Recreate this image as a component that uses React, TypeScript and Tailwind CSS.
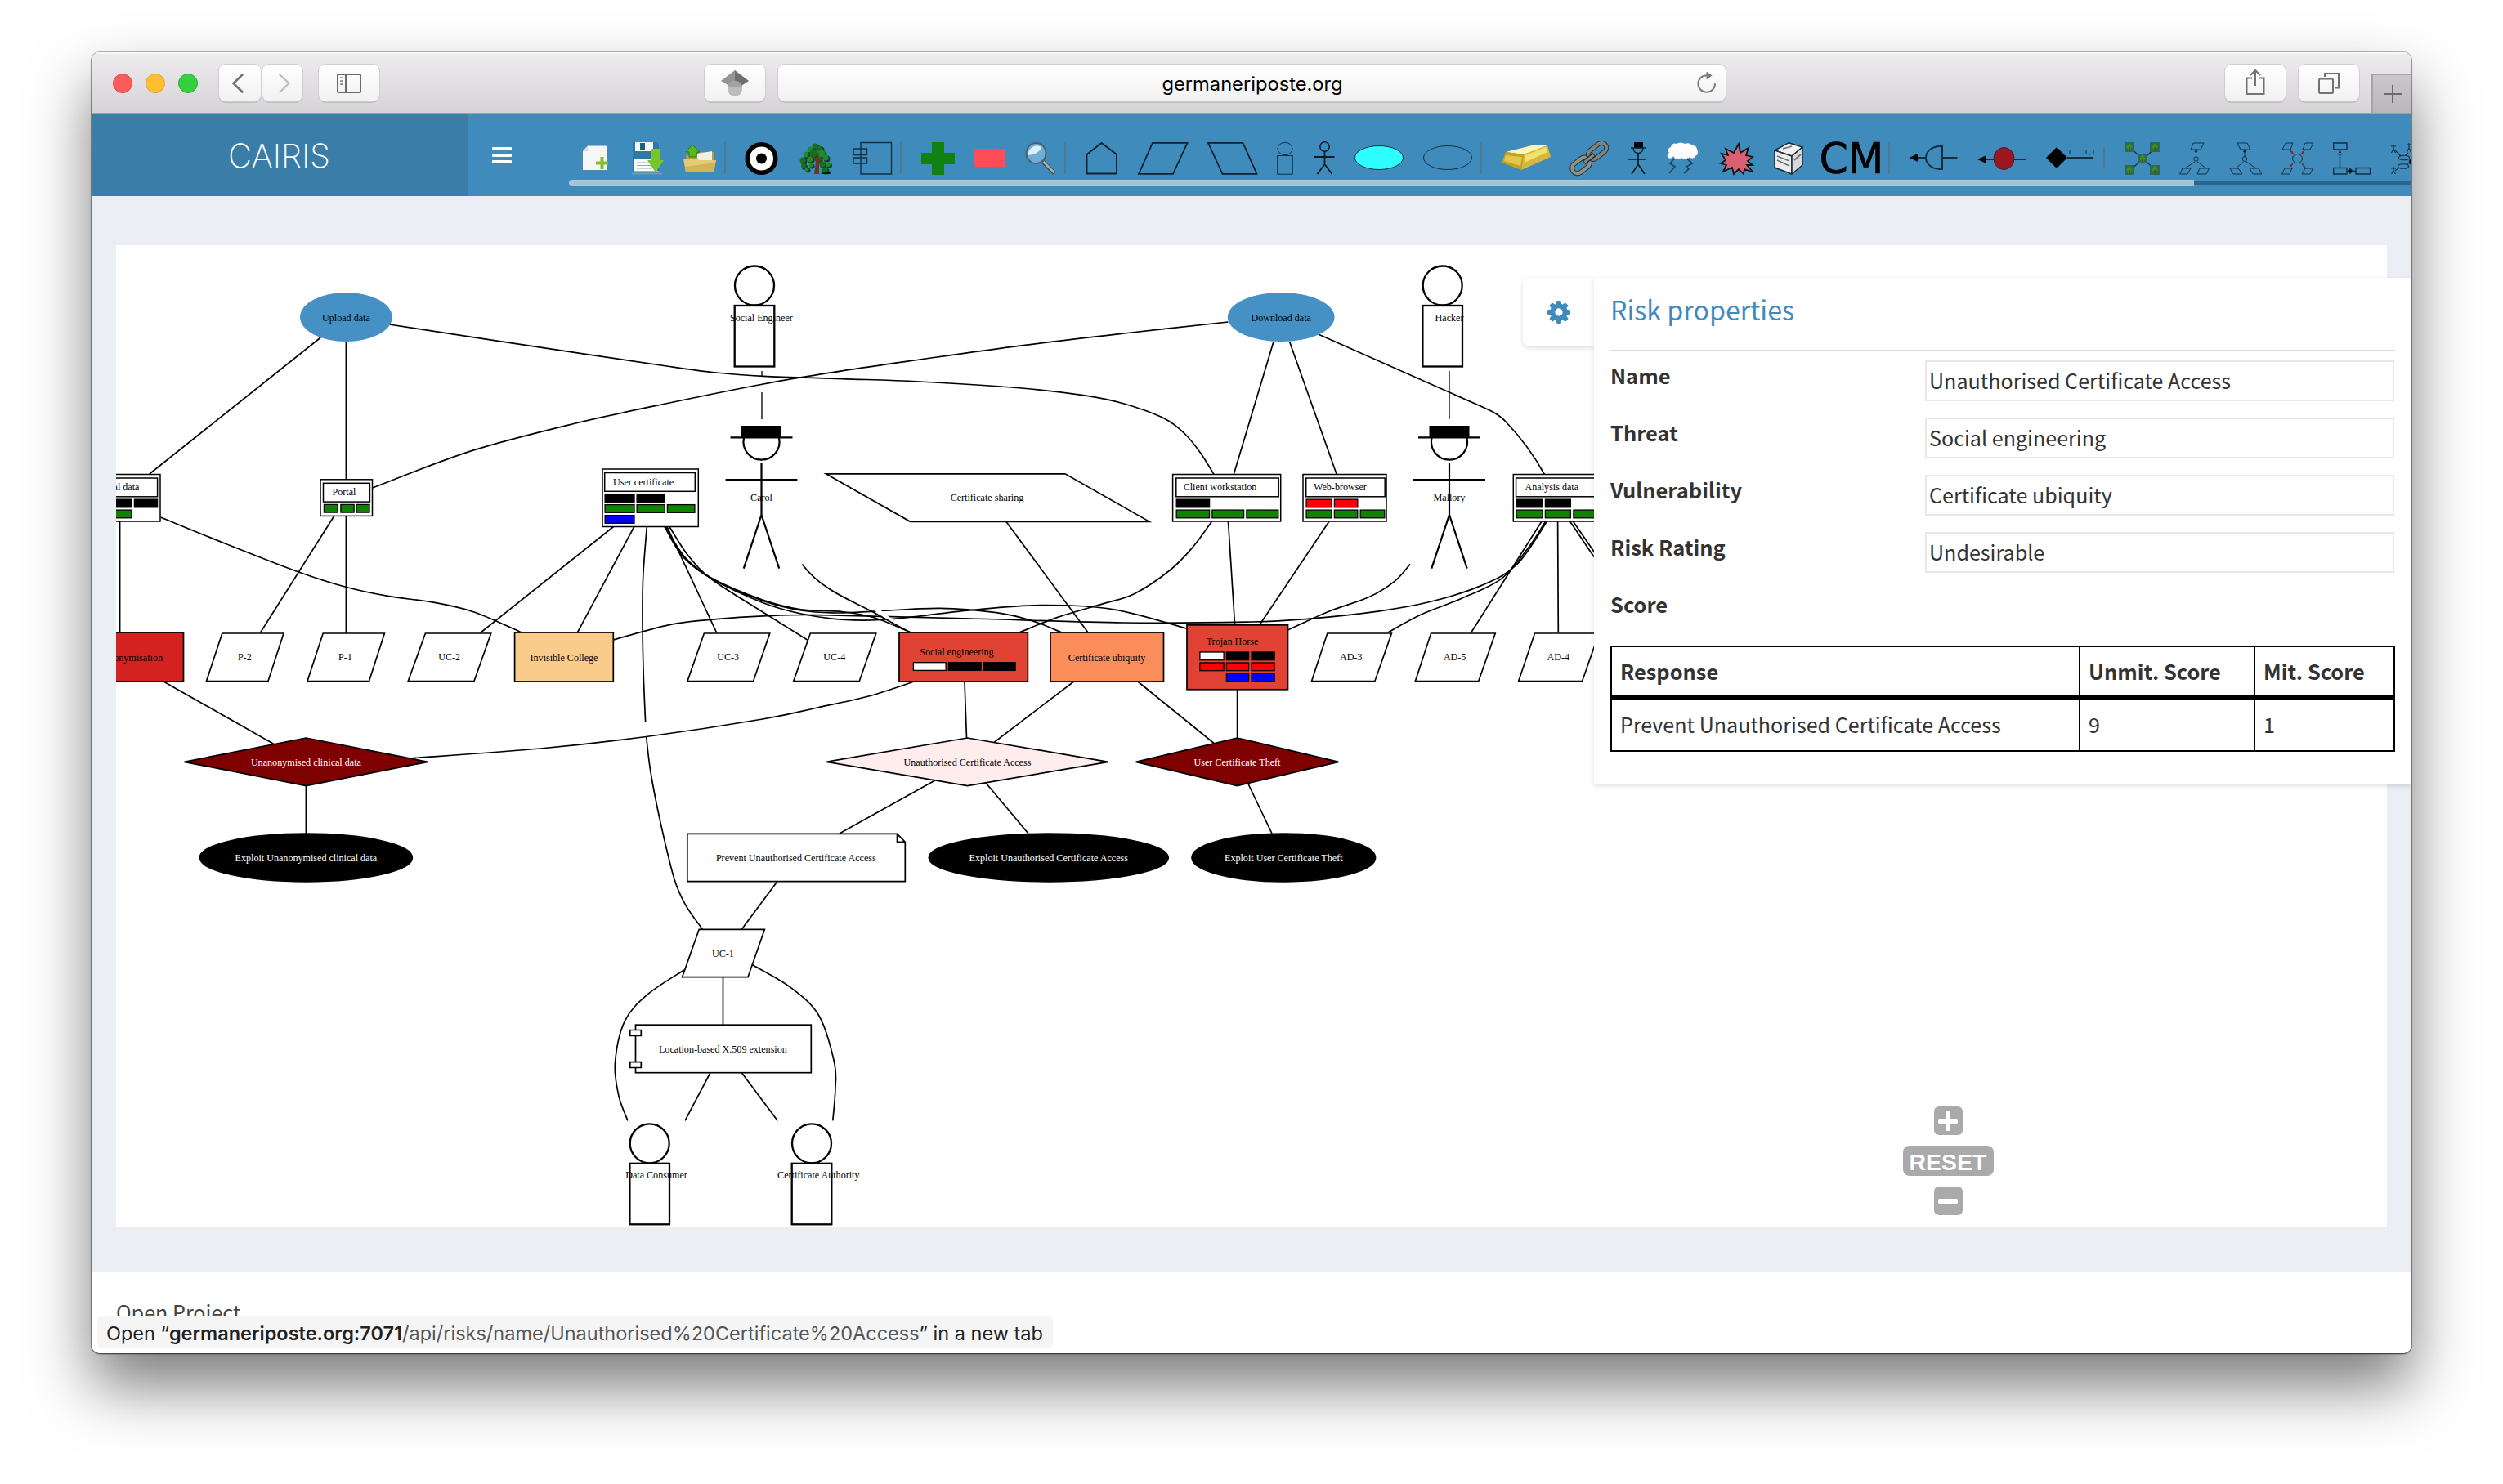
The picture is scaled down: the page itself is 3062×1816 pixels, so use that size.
import React from "react";

/* ---------- Browser chrome ---------- */

const btn =
  "flex items-center justify-center h-[45px] rounded-[8px] bg-gradient-to-b from-white to-[#f1f1f1] shadow-[0_0_0_1px_#cfcdcf,0_1.5px_0.5px_#a3a1a4]";

function TitleBar() {
  return (
    <div className="flex h-[76px] shrink-0 items-center border-b-2 border-[#a09fa2] bg-gradient-to-b from-[#eeecef] to-[#d5d3d6] pt-px shadow-[inset_0_2px_0_#f8f7f8]">
      <div className="ml-[26px] flex gap-4">
        <div className="size-6 rounded-full border border-[#e2463f] bg-[#ff5b5c]" />
        <div className="size-6 rounded-full border border-[#dfa023] bg-[#ffc02f]" />
        <div className="size-6 rounded-full border border-[#1fae2c] bg-[#35d03f]" />
      </div>
      <div className="ml-[26px] flex gap-0.5">
        <div className={`${btn} w-[51px] pr-[5px]`}>
          <svg width="14" height="24" viewBox="0 0 14 24" fill="none" stroke="#727173" strokeWidth="2.6" strokeLinecap="round" strokeLinejoin="round">
            <path d="M12.5 1.5 L1.5 12 L12.5 22.5" />
          </svg>
        </div>
        <div className={`${btn} w-[49px] pl-[4px]`}>
          <svg width="14" height="24" viewBox="0 0 14 24" fill="none" stroke="#bdbcbe" strokeWidth="2.4" strokeLinecap="round" strokeLinejoin="round">
            <path d="M1.5 1.5 L12.5 12 L1.5 22.5" />
          </svg>
        </div>
      </div>
      <div className={`${btn} ml-5 w-[74px]`}>
        <svg width="30" height="24" viewBox="0 0 30 24" fill="none" stroke="#6b6a6c">
          <rect x="1" y="1" width="28" height="22" rx="1.5" strokeWidth="2" />
          <path d="M11 1V23" strokeWidth="2" />
          <path d="M4 5.2H8M4 9.2H8M4 13.2H8" strokeWidth="1.8" stroke="#8a898b" />
        </svg>
      </div>
      <div className={`${btn} ml-[398px] w-[74px]`}>
        <svg width="34" height="32" viewBox="0 0 34 32">
          <path d="M17 0 L0 13 L10 19 L17 15Z" fill="#949494" />
          <path d="M17 0 L34 13 L25 19 L17 15Z" fill="#6f6f6f" />
          <path d="M17 14 a9 9 0 0 1 9 9 a9 9 0 0 1 -18 0 a9 9 0 0 1 9 -9" fill="#bcbcbc" />
          <path d="M8 20 a9.2 9.2 0 0 1 18 0 L17 20Z" fill="#a3a3a3" />
        </svg>
      </div>
      <div className={`${btn} relative ml-4 w-[1160px]`}>
        <span className="pl-px pt-[3px] font-[Inter] text-[23.7px] text-black">germaneriposte.org</span>
        <svg className="absolute right-[11px] top-[9px]" width="24" height="26" viewBox="0 0 24 26" fill="none" stroke="#7b7a7c" strokeWidth="2">
          <path d="M22 14.2 A10.3 10.3 0 1 1 12 4.2" />
          <path d="M11.5 -0.5 L18.5 4.5 L11.5 9.5Z" fill="#7b7a7c" stroke="none" />
        </svg>
      </div>
      <div className={`${btn} ml-[611px] w-[74px]`}>
        <svg className="-mt-1" width="24" height="32" viewBox="0 0 24 32" fill="none" stroke="#727173" strokeWidth="2">
          <path d="M8 11.5H1.5V31H22.5V11.5H16" />
          <path d="M12 21V2M6 8L12 2L18 8" />
        </svg>
      </div>
      <div className={`${btn} ml-4 w-[74px]`}>
        <svg width="26" height="26" viewBox="0 0 26 26" fill="none" stroke="#727173" strokeWidth="2">
          <rect x="1" y="7.5" width="17" height="17.5" rx="1.5" />
          <path d="M8 5V1H25V18.5H21" />
        </svg>
      </div>
      <div className="ml-[15px] flex h-[48px] w-[49px] items-center justify-center self-end border-l-2 border-t-2 border-[#a6a4a7] bg-gradient-to-b from-[#c9c7ca] to-[#b9b7ba]">
        <svg width="22" height="22" viewBox="0 0 22 22" stroke="#69686a" strokeWidth="2">
          <path d="M11 0V22M0 11H22" />
        </svg>
      </div>
    </div>
  );
}

/* ---------- Toolbar ---------- */

function Icon({ x, w, ml, children }: { x: number; w: number; ml: string; children: React.ReactNode }) {
  return (
    <svg className={`shrink-0 overflow-visible ${ml}`} width={w} height={40} viewBox={`${x} 174 ${w} 40`} fill="none" stroke="#12303f" strokeWidth="1.4">
      {children}
    </svg>
  );
}

function Sep({ ml }: { ml: string }) {
  return <div className={`h-[39px] w-0.5 shrink-0 bg-[#4d7a97] ${ml}`} />;
}

function MiniTree({ x, y }: { x: number; y: number }) {
  return (
    <g stroke="none">
      <rect x={x} y={y} width="12" height="12" fill="#2a6a55" />
      <path d={`M${x + 6} ${y + 1} l4 5 l-2 1 l-1 4 h-2 l-1 -3 l-2 -2z`} fill="#3d8f1e" />
      <path d={`M${x + 6} ${y + 6} v5`} stroke="#6b3d10" strokeWidth="1.5" />
    </g>
  );
}

const leaves: [number, number, number][] = [
  [997, 179, 4], [991, 183, 4], [1003, 182, 4], [986, 189, 4], [995, 188, 5], [1005, 188, 5], [982, 196, 4],
  [991, 195, 4], [1001, 195, 4], [1010, 193, 4], [983, 203, 3.5], [992, 202, 3], [1006, 201, 4], [1013, 201, 3.5],
  [1009, 208, 4], [987, 207, 3],
];

function ToolIcons() {
  return (
    <div className="flex h-10 shrink-0">
      <Icon x={713} w={32} ml="ml-[17px]">
        <path d="M719 178.500H743V208H713V185Z" fill="#f6f6f6" stroke="none" />
        <path d="M713 185H719V178.500Z" fill="#dcdcdc" stroke="none" />
        <path d="M736.500 192V207M729 199.500H744" stroke="#84bd24" strokeWidth="4" />
      </Icon>
      <Icon x={773} w={39} ml="ml-[28px]">
        <path d="M774 174H803L806 177V211H774Z" fill="#2c7ba6" stroke="none" />
        <rect x="777" y="174" width="22" height="11" fill="#f7f7f7" stroke="none" />
        <rect x="783" y="175" width="6" height="9" fill="#1f5f86" stroke="none" />
        <rect x="776" y="195" width="28" height="14" fill="#fbfbfb" stroke="none" />
        <path d="M779 199H798M779 202.500H798M779 206H798" stroke="#98a6b5" strokeWidth="1" />
        <path d="M775 210H806" stroke="#d8aa53" strokeWidth="2" />
        <path d="M773 212.500H810" stroke="#7d99a8" strokeWidth="2" />
        <path d="M797 182H807V196H812L802 211L792 196H797Z" fill="#76c52b" stroke="none" />
      </Icon>
      <Icon x={836} w={40} ml="ml-[24px]">
        <path d="M839 190H852L856 186H874V206H839Z" fill="#b99a45" stroke="none" />
        <path d="M853 188L871 185V196H853Z" fill="#f2efe4" stroke="none" />
        <path d="M836 194H852L856 196H876L873 211H839Z" fill="#e6ca78" stroke="none" />
        <path d="M838 204L875 199L873 211H839Z" fill="#d4b355" stroke="none" />
        <path d="M847 177L856 186H852V192H843V186H839Z" fill="#5bb81c" stroke="#2f7d10" strokeWidth="1" />
      </Icon>
      <Sep ml="ml-[10px]" />
      <Icon x={911} w={41} ml="ml-[23px]">
        <g stroke="none">
          <circle cx="931.5" cy="194" r="20" fill="#000" />
          <circle cx="931.5" cy="194" r="14.500" fill="#fff" />
          <circle cx="931.5" cy="194" r="6.500" fill="#000" />
        </g>
      </Icon>
      <Icon x={976} w={42} ml="ml-[24px]">
        <g stroke="none">
          {leaves.map(([cx, cy, r], i) => (
            <g key={i}>
              <circle cx={cx + 1.5} cy={cy + 1.5} r={r} fill="#0f3d24" />
              <circle cx={cx} cy={cy} r={r - 0.5} fill={i % 2 ? "#1f8a2c" : "#17701f"} />
            </g>
          ))}
          <path d="M996 213L998 198L992 190L999 194L1001 186L1002 195L1008 191L1002 200L1002 213Z" fill="#6a3526" />
          <path d="M1004 213L1008 210H1018L1015 213Z" fill="#081a10" />
        </g>
      </Icon>
      <Icon x={1043} w={48} ml="ml-[25px]">
        <path d="M1053 174.500H1090.500V213H1053Z" />
        <path d="M1044 182H1060.500V189.500H1044ZM1044 193H1060.500V200H1044Z" />
      </Icon>
      <Sep ml="ml-[10px]" />
      <Icon x={1127} w={41} ml="ml-[24px]">
        <path d="M1140 174H1155V187H1168V201H1155V214H1140V201H1127V187H1140Z" fill="#118211" stroke="none" />
      </Icon>
      <Icon x={1192} w={38} ml="ml-[24px]">
        <rect x="1192" y="182" width="38" height="22" fill="#ff4d56" stroke="none" />
      </Icon>
      <Icon x={1254} w={38} ml="ml-[24px]">
        <ellipse cx="1267.500" cy="187.500" rx="12" ry="12.500" fill="#6fadd6" stroke="#4a5f70" strokeWidth="2" />
        <path d="M1258 190a10.500 10.500 0 0 1 16 -10q-3 9 -16 10" fill="#dceefa" stroke="none" />
        <path d="M1276 198L1290 212" stroke="#3f4c52" strokeWidth="5" />
        <path d="M1276.500 198L1290 211.500" stroke="#a4b3a8" strokeWidth="2.600" />
      </Icon>
      <Sep ml="ml-[10px]" />
      <Icon x={1328} w={40} ml="ml-[24px]">
        <path d="M1329.500 189L1347.500 175L1366 189V212.500H1329.500Z" strokeWidth="2" stroke="#0d2230" />
      </Icon>
      <Icon x={1392} w={62} ml="ml-[24px]">
        <path d="M1410 174.800H1452.500L1435 212.800H1393Z" strokeWidth="1.800" stroke="#0d2230" />
      </Icon>
      <Icon x={1477} w={62} ml="ml-[23px]">
        <path d="M1478 174.800H1520.500L1537.500 212.800H1495.500Z" strokeWidth="1.800" stroke="#0d2230" />
      </Icon>
      <Icon x={1562} w={20} ml="ml-[23px]">
        <ellipse cx="1572" cy="182" rx="9" ry="7.700" strokeWidth="1" />
        <rect x="1562.700" y="190.500" width="18.600" height="22.700" strokeWidth="1" />
      </Icon>
      <Icon x={1606} w={28} ml="ml-[24px]">
        <g strokeWidth="1.800" stroke="#0b1b25">
          <circle cx="1620.500" cy="179.500" r="5.700" strokeWidth="1.500" />
          <path d="M1620.500 185V201M1607.500 192H1632.500M1611.500 213L1620.500 201L1629.500 213" />
        </g>
      </Icon>
      <Icon x={1656} w={62} ml="ml-[22px]">
        <ellipse cx="1687" cy="193" rx="29.500" ry="14.500" fill="#2cfffd" strokeWidth="1" />
      </Icon>
      <Icon x={1740} w={62} ml="ml-[22px]">
        <ellipse cx="1771" cy="193" rx="29.500" ry="14.500" strokeWidth="1" />
      </Icon>
      <Sep ml="ml-[9px]" />
      <Icon x={1837} w={60} ml="ml-[24px]">
        <g stroke="none">
          <path d="M1842 186L1874 178H1893L1864 189Z" fill="#fff6b8" />
          <path d="M1842 186L1864 189L1861 208L1837 199Z" fill="#c99f1c" />
          <path d="M1842 190L1862 192L1860 203L1840 197Z" fill="#e3c748" />
          <path d="M1864 189L1893 178L1897 192L1861 208Z" fill="#d8b83c" />
          <path d="M1866 190L1891 180L1893 186L1865 199Z" fill="#f2e06f" />
        </g>
      </Icon>
      <Icon x={1920} w={48} ml="ml-[23px]">
        <g transform="rotate(-38 1944 194)" strokeLinejoin="round">
          <rect x="1919" y="188" width="24" height="13" rx="6.500" stroke="#27303a" strokeWidth="6" />
          <rect x="1919" y="188" width="24" height="13" rx="6.500" stroke="#8f9484" strokeWidth="4" />
          <rect x="1945" y="187" width="25" height="12" rx="6" stroke="#27303a" strokeWidth="6" />
          <rect x="1945" y="187" width="25" height="12" rx="6" stroke="#7f857a" strokeWidth="4" />
          <path d="M1936 194H1952" stroke="#27303a" strokeWidth="6" />
          <path d="M1937 194H1951" stroke="#858c80" strokeWidth="3" />
        </g>
      </Icon>
      <Icon x={1991} w={24} ml="ml-[23px]">
        <g stroke="#0b1b25" strokeWidth="1.700">
          <rect x="1999" y="174" width="11" height="7" fill="#000" stroke="none" />
          <path d="M1995 181H2013" />
          <path d="M1998 181.500a6 6 0 1 0 12 0" strokeWidth="1.400" />
          <path d="M2004 187V201M1992 195H2014M1996 213L2004 201L2012 213" />
        </g>
      </Icon>
      <Icon x={2039} w={40} ml="ml-[24px]">
        <path d="M2042 187a4 4 0 0 1 2-7a5 5 0 0 1 7-4a7 5 0 0 1 10 0a6 4 0 0 1 9 2a5 5 0 0 1 6 5a5 5 0 0 1-2 8a4 4 0 0 1-7 1a6 5 0 0 1-10 1a6 5 0 0 1-10-2a4 4 0 0 1-7 1a4 4 0 0 1 2-5" fill="#fdfdfd" stroke="none" />
        <path d="M2048 194L2043 200L2049 204L2042 212M2064 194L2070 200L2063 204L2066 207L2060 212" stroke="#1d4763" strokeWidth="1.800" />
      </Icon>
      <Icon x={2104} w={42} ml="ml-[25px]">
        <path d="M2127 176L2129 187L2139 181L2136 190L2144 192L2138 197L2144 202L2137 202L2145 211L2134 207L2133 213L2127 207L2121 213L2119 205L2108 210L2112 202L2105 200L2111 196L2106 188L2114 190L2111 182L2121 187Z" fill="#dc5f73" stroke="#10161c" strokeWidth="1.800" />
      </Icon>
      <Icon x={2170} w={36} ml="ml-[24px]">
        <g stroke="#1c2a33" strokeWidth="1.500" strokeLinejoin="round">
          <path d="M2188 174.800L2205 180L2192 191L2171 184Z" fill="#f0f0f0" />
          <path d="M2171 184L2192 191V213L2171 205Z" fill="#ececec" />
          <path d="M2205 180L2192 191V213L2205 202Z" fill="#d9d9d9" />
          <path d="M2174 191L2189 197M2174 196L2189 203M2181 182L2192 179M2195 196L2203 189" stroke="#6d7376" strokeWidth="1.800" />
        </g>
      </Icon>
      <Icon x={2228} w={72} ml="ml-[22px]">
        <text x="2225.500" y="212" fontSize="51" textLength="79" lengthAdjust="spacingAndGlyphs" fill="#000" stroke="#000" strokeWidth="0.600" className="font-['DejaVu_Sans']">CM</text>
      </Icon>
      <Sep ml="ml-[10px]" />
      <Icon x={2335} w={60} ml="ml-[23px]">
        <path d="M2335.500 193L2346 188V198Z" fill="#05090c" stroke="none" />
        <path d="M2346 193H2356M2376 193H2394.500" strokeWidth="2" />
        <path d="M2376 179H2372C2361 180 2356 187 2356 193C2356 199 2361 206 2372 207H2376Z" strokeWidth="2" />
      </Icon>
      <Icon x={2419} w={60} ml="ml-[24px]">
        <path d="M2419 195L2430 190V200Z" fill="#05090c" stroke="none" />
        <path d="M2430 195H2478" strokeWidth="2" />
        <ellipse cx="2451.500" cy="194" rx="12.500" ry="13.500" fill="#9b1720" stroke="#4a1a2c" strokeWidth="1" />
      </Icon>
      <Icon x={2503} w={60} ml="ml-[24px]">
        <path d="M2503 193L2516 180L2529 193L2516 206Z" fill="#000" stroke="none" />
        <path d="M2529 193H2561" strokeWidth="2" />
        <path d="M2532 184V189M2552 184V189M2556 188V190M2561 184V188" strokeWidth="1" />
      </Icon>
      <div className="ml-[10px] mt-1.5 h-[27px] w-0.5 shrink-0 bg-[#4d7a97]" />
      <Icon x={2599} w={44} ml="ml-[24px]">
        <path d="M2607 182L2636 207M2636 182L2607 207" />
        <MiniTree x={2599} y={174} />
        <MiniTree x={2630} y={174} />
        <MiniTree x={2615} y={188} />
        <MiniTree x={2599} y={202} />
        <MiniTree x={2630} y={202} />
      </Icon>
      <Icon x={2666} w={37} ml="ml-[23px]">
        <g strokeWidth="1">
          <path d="M2683 175H2696L2692 183H2680ZM2670 206H2680L2676 213H2666.500ZM2691 206H2702.500L2699 213H2688Z" />
          <path d="M2686.500 183V192M2685 198L2673 206M2688 198L2699 206" />
          <circle cx="2686.500" cy="194.500" r="2.800" />
          <path d="M2685 186L2686.500 183L2688 186Z" fill="#000" />
        </g>
      </Icon>
      <Icon x={2727} w={40} ml="ml-[24px]">
        <g strokeWidth="1">
          <path d="M2737 175H2749L2753 183H2741ZM2728 206H2738L2743 213H2732ZM2752 206H2763L2767 213H2756Z" />
          <path d="M2746 183V192M2744.500 198L2735 206M2748 198L2760 206" />
          <circle cx="2746" cy="194.500" r="2.800" />
          <path d="M2744.500 186L2746 183L2747.500 186Z" fill="#000" />
        </g>
      </Icon>
      <Icon x={2791} w={39} ml="ml-[24px]">
        <g strokeWidth="1">
          <path d="M2796 175H2805L2802 183H2792ZM2820 175H2830L2826 183H2817ZM2795 206H2804L2801 213H2791.500ZM2820 206H2829.500L2826 213H2816Z" />
          <path d="M2801 183L2806 189M2820 183L2815 189M2806 199L2800 206M2815 199L2821 206" />
          <ellipse cx="2810.500" cy="194" rx="6" ry="5.500" />
          <path d="M2803 185L2805 188M2818 185L2816 188M2804 201L2802 204M2817 201L2819 204" stroke="#8c1d2d" strokeWidth="2" />
        </g>
      </Icon>
      <Icon x={2854} w={46} ml="ml-[24px]">
        <path d="M2854.700 175H2871V183H2854.700ZM2854.700 205.500H2871V213H2854.700ZM2882 205.500H2899.500V213H2882Z" />
        <path d="M2862.500 183V205.500M2871 209.500H2882" />
        <path d="M2862.500 184L2864.500 189H2860.500Z" fill="#fff" strokeWidth="1" />
        <path d="M2872 209.500L2875 206.500L2878 209.500L2875 212Z" fill="#000" />
      </Icon>
      <Icon x={2924} w={40} ml="ml-[24px]">
        <g strokeWidth="1.100">
          <path d="M2928 177V182M2925 179H2931M2925.500 187L2928 182L2930.500 187M2947 175V181M2944 177H2950M2944.500 186L2947 181L2949.500 186" />
          <path d="M2928 204V209M2925 206H2931M2925.500 213L2928 209L2930.500 213" />
          <ellipse cx="2941" cy="193" rx="6.500" ry="2.800" />
          <ellipse cx="2940" cy="203.500" rx="6.500" ry="2.800" />
          <path d="M2930 184L2937 191M2946 187L2943 190M2930 209L2935 205M2944 201L2950 198" />
          <circle cx="2950" cy="198" r="2.800" fill="#000" />
        </g>
      </Icon>
    </div>
  );
}

function Header() {
  return (
    <div className="flex h-[100px] shrink-0 bg-[#3f8bbc]">
      <div className="flex w-[460px] items-center justify-center bg-[#397da8]">
        <svg className="overflow-visible" width="126" height="44" viewBox="0 0 126 44">
          <text x="0" y="36.500" fontSize="40" fill="#fff" textLength="125" lengthAdjust="spacingAndGlyphs" className="font-['Inter'] font-extralight">CAIRIS</text>
        </svg>
      </div>
      <div className="ml-[30px] mt-10 flex w-6 flex-col gap-1">
        <div className="h-1 rounded-[1px] bg-white" />
        <div className="h-1 rounded-[1px] bg-white" />
        <div className="h-1 rounded-[1px] bg-white" />
      </div>
      <div className="ml-[70px] w-[2254px] overflow-hidden pt-[34px]">
        <ToolIcons />
        <div className="mt-1.5 flex h-2 items-center">
          <div className="h-2 w-[1990px] rounded border-2 border-[#a9cbe2] bg-[#a5c1d2]" />
          <div className="-ml-0.5 h-1 flex-1 bg-[#2c6588]" />
        </div>
      </div>
    </div>
  );
}

/* ---------- Risk model graph ---------- */

type Pt = [number, number];

/* Catmull-Rom spline through the given points, as a cubic Bézier path. */
function spline(p: Pt[]): string {
  let d = `M${p[0][0]} ${p[0][1]}`;
  for (let i = 0; i < p.length - 1; i++) {
    const a = p[i - 1] ?? p[i];
    const b = p[i];
    const c = p[i + 1];
    const e = p[i + 2] ?? c;
    d += `C${b[0] + (c[0] - a[0]) / 6} ${b[1] + (c[1] - a[1]) / 6} ${c[0] - (e[0] - b[0]) / 6} ${c[1] - (e[1] - b[1]) / 6} ${c[0]} ${c[1]}`;
  }
  return d;
}

const lines: [number, number, number, number][] = [
  [392.3, 413, 182.8, 580], [423.4, 418, 423.4, 587], [146.6, 638, 146.6, 774], [409, 631, 318.3, 774.5],
  [423.4, 631, 423.4, 775], [750.5, 644.5, 587.5, 774.5], [775.8, 644.5, 706.4, 774], [816, 644.5, 876.8, 774.5],
  [1558, 418, 1509.4, 580], [1577.5, 418, 1635, 580], [1231, 638.5, 1331, 774], [1502.5, 638, 1510.6, 764.5],
  [1626, 638, 1541, 764.5], [1886, 638, 1799.4, 774.5], [1905.6, 638, 1906.3, 774.5], [1920.6, 638, 1950, 681.6],
  [1924.4, 638, 1952, 678], [1180, 834.5, 1182.5, 903], [1313, 834.5, 1216, 908.5], [1392.5, 834.5, 1485, 909.5],
  [1513.6, 844, 1513.6, 903], [201, 834.5, 335, 910.5], [374.4, 961.6, 374.4, 1020], [1143.8, 955, 1026.9, 1020],
  [1206, 958, 1258, 1020], [1526.9, 959, 1556, 1020], [950.6, 1079, 907.5, 1137], [884.5, 1195.5, 884.5, 1254],
  [868.8, 1313, 838, 1371.4], [907.5, 1313, 951.3, 1371.4],
];

const curves: Pt[][] = [
  [[196.6, 633], [276.4, 665.5], [365.4, 700], [422.8, 718.3], [474.4, 729.4], [531.8, 737.4], [580, 749], [638, 774]],
  [[791.3, 644.5], [786.7, 705.7], [786, 759], [787, 820], [789.6, 883.6]],
  [[790.6, 901], [796, 945], [808, 1006.5], [825, 1076], [839.4, 1108.6], [859.4, 1137]],
  [[818.9, 644.5], [842, 680], [870.5, 708.7], [930, 747], [988, 783.3]],
  [[813, 644.5], [836, 682], [870.5, 707.6], [933.7, 734.4], [979.6, 745.8], [1030, 748.5], [1070, 756], [1114, 774]],
  [[813.5, 644.5], [837, 682], [871, 708.5], [934, 735.5], [980, 747], [1025, 750], [1073.8, 747.8], [1150, 744.3], [1218.8, 749.7], [1262.5, 759.6], [1298.8, 774]],
  [[814, 644.5], [838, 682], [872, 708.5], [933, 737.5], [980, 751], [1030, 758.2], [1087.5, 758], [1187.5, 746.6], [1275, 740.5], [1362.5, 745.8], [1451.5, 769]],
  [[750.5, 783], [818.9, 764.6], [876.3, 757.7], [933.7, 753.9], [1000, 752.6], [1187.5, 757], [1375, 762], [1531, 761], [1600, 757.3], [1687.5, 747.8], [1750, 736.3], [1812.5, 716.4], [1856, 690.4], [1892.5, 638]],
  [[476, 397], [618, 418.6], [819, 448.5], [876, 456], [933.7, 460.3], [1030, 463.6], [1125, 467], [1250, 475], [1325, 483.7], [1375, 494], [1425, 512.4], [1450, 531.5], [1468.8, 554.5], [1485, 580.5]],
  [[455.5, 597], [577.8, 551.4], [704, 518], [819, 493], [933.7, 470], [1030, 453.8], [1125, 440], [1250, 422.8], [1375, 408], [1502.5, 394]],
  [[1482.5, 638], [1459.4, 669.3], [1431, 698], [1387.5, 726.7], [1350, 738.6], [1293.8, 755.4], [1247, 774]],
  [[1725, 690.4], [1706, 711.4], [1675, 730.5], [1625, 748.5], [1575.6, 771]],
  [[1890.6, 638], [1872, 667], [1837.5, 707.6], [1787.5, 732.5], [1737.5, 752.4], [1698, 774]],
  [[1116.9, 834.5], [1062.5, 852], [1000, 866], [933, 880], [790.6, 901.5], [661, 916], [503.8, 927.8]],
  [[836.9, 1187], [792.5, 1216.7], [764.4, 1249.4], [752.5, 1300.4], [756.9, 1341], [768, 1371.4]],
  [[920.6, 1180.8], [967.5, 1208.6], [1001.9, 1243], [1020.6, 1300], [1021.9, 1333], [1018.8, 1371.4]],
];

/* Parallelogram given by its four x positions: top-left, top-right, bottom-right, bottom-left. */
function Para({ xs, y1 = 775, y2 = 833.5, label, tx }: { xs: [number, number, number, number]; y1?: number; y2?: number; label: string; tx: number }) {
  const pts: Pt[] = [[xs[0], y1], [xs[1], y1], [xs[2], y2], [xs[3], y2]];
  return (
    <g>
      <polygon points={pts.map((p) => p.join(",")).join(" ")} fill="#fff" />
      <Label x={tx} y={(y1 + y2) / 2}>{label}</Label>
    </g>
  );
}

function Label({ x, y, anchor = "middle", color = "#000", children }: { x: number; y: number; anchor?: "start" | "middle" | "end"; color?: string; children: string }) {
  return (
    <text x={x} y={y + 4} fontSize="12.1" fill={color} stroke="none" textAnchor={anchor}>
      {children}
    </text>
  );
}

type Cell = [number, number, string];
function Cells({ y, h = 10.5, cells }: { y: number; h?: number; cells: Cell[] }) {
  return (
    <g strokeWidth="1.3">
      {cells.map(([a, b, c], i) => (
        <rect key={i} x={a + 0.4} y={y + 0.4} width={b - a - 0.8} height={h - 0.8} fill={c} />
      ))}
    </g>
  );
}

function Asset({ x1, x2, y1, y2, ix1, ix2, tx, label, rows }: { x1: number; x2: number; y1: number; y2: number; ix1: number; ix2: number; tx: number; label: string; rows: Cell[][] }) {
  return (
    <g strokeWidth="1.5">
      <rect x={x1} y={y1} width={x2 - x1} height={y2 - y1} fill="#fff" />
      <rect x={ix1} y={y1 + 4.5} width={ix2 - ix1} height={22.8} fill="#fff" />
      <Label x={tx} y={y1 + 15.5} anchor="start">{label}</Label>
      {rows.map((r, i) => (
        <Cells key={i} y={y1 + 30.2 + i * 13} cells={r} />
      ))}
    </g>
  );
}

function Role({ cx, cy, label, tx }: { cx: number; cy: number; label: string; tx: number }) {
  return (
    <g strokeWidth="2.3">
      <circle cx={cx} cy={cy} r={24} />
      <rect x={cx - 24.3} y={cy + 24.5} width={48.6} height={74.5} />
      <Label x={tx} y={cy + 39}>{label}</Label>
    </g>
  );
}

function Attacker({ cx, label }: { cx: number; label: string }) {
  return (
    <g strokeWidth="2.2">
      <path d={`M${cx - 21.5} 536 A22 22 0 1 0 ${cx + 21.5} 536`} />
      <rect x={cx - 24.5} y={521} width={49} height={14} fill="#000" stroke="none" />
      <path d={`M${cx - 38} 535.400H${cx + 38}M${cx} 566V630M${cx - 44} 587H${cx + 44}M${cx - 21.7} 695.700L${cx} 630L${cx + 21.7} 695.700`} />
      <Label x={cx} y={609}>{label}</Label>
    </g>
  );
}

function Diamond({ cx, hw, fill, color, label }: { cx: number; hw: number; fill: string; color: string; label: string }) {
  return (
    <g>
      <polygon points={`${cx - hw},932.300 ${cx},903 ${cx + hw},932.300 ${cx},961.600`} fill={fill} />
      <Label x={cx} y={933} color={color}>{label}</Label>
    </g>
  );
}

function Misuse({ cx, rx, label }: { cx: number; rx: number; label: string }) {
  return (
    <g>
      <ellipse cx={cx} cy={1049.5} rx={rx} ry={29.3} fill="#000" />
      <Label x={cx} y={1050} color="#fff">{label}</Label>
    </g>
  );
}

const K = "#000";
const G = "#118200";
const R = "#fb0007";
const B = "#0000fb";
const W = "#fff";

function Graph() {
  return (
    <svg className="block font-['Liberation_Serif']" width="2778" height="1202" viewBox="142 300 2778 1202" fill="none" stroke="#000" strokeWidth="1.7">
      {lines.map(([a, b, c, d], i) => (
        <path key={i} d={`M${a} ${b}L${c} ${d}`} />
      ))}
      {curves.map((p, i) => (
        <path key={i} d={spline(p)} />
      ))}
      <path d="M1613.800 409.500L1818 500Q1834 507 1842 516C1862 537 1876 556 1889.400 580.500" />
      <path d="M1066 741L1094 763" stroke="#fff" strokeWidth="5" />
      <path d="M981.300 690.400C1005 722 1040 734 1070 750Q1094 764 1114 774" />
      <path d="M932 454V461M932 480V513M1773 454V513" strokeWidth="1.3" />

      <ellipse cx="423.4" cy="388" rx="56.4" ry="30" fill="#4590c5" stroke="none" />
      <Label x={423.4} y={388.5}>Upload data</Label>
      <ellipse cx="1567.2" cy="388" rx="65.4" ry="30" fill="#4590c5" stroke="none" />
      <Label x={1567.2} y={388.5}>Download data</Label>

      <Role cx={923} cy={349.5} label="Social Engineer" tx={931.4} />
      <Role cx={1764.7} cy={349.5} label="Hacker" tx={1773} />
      <Role cx={794.7} cy={1399.3} label="Data Consumer" tx={803} />
      <Role cx={993} cy={1399.3} label="Certificate Authority" tx={1001.3} />
      <Attacker cx={931.5} label="Carol" />
      <Attacker cx={1773} label="Mallory" />

      <Asset x1={97} x2={196} y1={580.5} y2={638} ix1={100} ix2={192.6} tx={109} label="Clinical data"
        rows={[[[134, 161.5, K], [164, 193, K]], [[134, 161.5, G]]]} />
      <Asset x1={392} x2={455.5} y1={586.8} y2={631.4} ix1={395.5} ix2={452.4} tx={406.5} label="Portal"
        rows={[[[396, 413.5, G], [416.5, 433.5, G], [435.7, 452.4, G]]]} />
      <Asset x1={737} x2={854.3} y1={574} y2={644.5} ix1={739.7} ix2={850.3} tx={750} label="User certificate"
        rows={[[[739.7, 776.4, K], [778.7, 813.7, K]], [[739.7, 776.4, G], [778.7, 813.7, G], [816, 850.3, G]], [[739.7, 776.4, B]]]} />
      <Asset x1={1434.6} x2={1566.7} y1={580.5} y2={638} ix1={1438.8} ix2={1564.2} tx={1447.7} label="Client workstation"
        rows={[[[1438.8, 1480, K]], [[1438.8, 1480, G], [1482.5, 1522, G], [1524.5, 1564.2, G]]]} />
      <Asset x1={1594} x2={1696} y1={580.5} y2={638} ix1={1597.7} ix2={1694.2} tx={1607} label="Web-browser"
        rows={[[[1597.7, 1629.4, R], [1632, 1661.2, R]], [[1597.7, 1629.4, G], [1632, 1661.2, G], [1663.8, 1694.2, G]]]} />
      <Asset x1={1851.3} x2={1960} y1={580.5} y2={638} ix1={1854.6} ix2={1957} tx={1865.6} label="Analysis data"
        rows={[[[1854.6, 1887.5, K], [1890, 1921.8, K]], [[1854.6, 1887.5, G], [1890, 1921.8, G], [1924.5, 1957, G]]]} />

      <Para xs={[1010.5, 1303, 1406, 1113.5]} y1={579.8} y2={638.3} label="Certificate sharing" tx={1207.5} />
      <Para xs={[271.8, 347, 328, 252.5]} label="P-2" tx={299.3} />
      <Para xs={[395.2, 470.4, 451.5, 376]} label="P-1" tx={422.5} />
      <Para xs={[520.4, 600.7, 580, 499.3]} label="UC-2" tx={549.7} />
      <Para xs={[861.4, 941.7, 921.6, 841]} label="UC-3" tx={890.6} />
      <Para xs={[991.3, 1071.7, 1051.3, 970.8]} label="UC-4" tx={1020.8} />
      <Para xs={[1623.8, 1702.4, 1681.9, 1604.6]} label="AD-3" tx={1652.7} />
      <Para xs={[1750.6, 1829.2, 1808.8, 1731.4]} label="AD-5" tx={1779.5} />
      <Para xs={[1877.5, 1956, 1935.6, 1857.7]} label="AD-4" tx={1906.3} />
      <Para xs={[855.2, 935.4, 915, 834.6]} y1={1137.3} y2={1195.7} label="UC-1" tx={884.4} />

      <rect x="84" y="774" width="140.500" height="60" fill="#d42220" />
      <Label x={199} y={804.5} anchor="end">De-anonymisation</Label>
      <rect x="629.600" y="774" width="120.700" height="60" fill="#facc8b" />
      <Label x={690} y={804.5}>Invisible College</Label>
      <rect x="1100" y="774" width="157.400" height="60" fill="#e04233" />
      <Label x={1170.5} y={797.5}>Social engineering</Label>
      <Cells y={810.3} cells={[[1117, 1157.5, W], [1160, 1200.5, K], [1202.7, 1242.5, K]]} />
      <rect x="1285" y="774" width="138.500" height="60" fill="#fb8d5b" />
      <Label x={1354} y={804.5}>Certificate ubiquity</Label>
      <rect x="1452" y="764.800" width="123.500" height="79" fill="#e04233" />
      <Label x={1507.5} y={784.5}>Trojan Horse</Label>
      <Cells y={797.6} cells={[[1467.5, 1497.5, W], [1500, 1528, K], [1530.7, 1559.5, K]]} />
      <Cells y={810.6} cells={[[1467.5, 1497.5, R], [1500, 1528, R], [1530.7, 1559.5, R]]} />
      <Cells y={823.6} cells={[[1500, 1528, B], [1530.7, 1559.5, B]]} />

      <Diamond cx={374.4} hw={149} fill="#7f0000" color="#fff" label="Unanonymised clinical data" />
      <Diamond cx={1183.5} hw={172.3} fill="#ffecec" color="#000" label="Unauthorised Certificate Access" />
      <Diamond cx={1513.5} hw={124} fill="#7f0000" color="#fff" label="User Certificate Theft" />
      <Misuse cx={374.4} rx={130} label="Exploit Unanonymised clinical data" />
      <Misuse cx={1282.8} rx={146.5} label="Exploit Unauthorised Certificate Access" />
      <Misuse cx={1570.3} rx={112.3} label="Exploit User Certificate Theft" />

      <path d="M840.800 1020.300H1097.500L1107.300 1030.300V1078.700H840.800ZM1097.500 1020.300V1030.300H1107.300" fill="#fff" />
      <Label x={973.8} y={1050.2}>Prevent Unauthorised Certificate Access</Label>
      <rect x="777.500" y="1254.200" width="214.800" height="58.500" fill="#fff" />
      <path d="M770.800 1260.500H784.300V1267.300H770.800ZM770.800 1299.700H784.300V1306.500H770.800Z" fill="#fff" />
      <Label x={884.4} y={1284.3}>Location-based X.509 extension</Label>
    </svg>
  );
}

/* ---------- Risk panel ---------- */

const fields = [
  ["Name", "Unauthorised Certificate Access"],
  ["Threat", "Social engineering"],
  ["Vulnerability", "Certificate ubiquity"],
  ["Risk Rating", "Undesirable"],
];

function RiskPanel() {
  return (
    <div className="absolute left-[1751px] top-[100px] flex items-start font-['Noto_Sans_CJK_SC'] text-[#333]">
      <div className="flex h-[84px] w-[87px] items-center justify-center rounded-l-[8px] bg-white shadow-[0_2px_6px_rgba(0,0,0,0.13)]">
        <svg width="28" height="28" viewBox="0 0 1536 1536" fill="#3f8bbc">
          <path d="M1024 768q0-106-75-181t-181-75-181 75-75 181 75 181 181 75 181-75 75-181zm512-109v222q0 12-8 23t-20 13l-185 28q-19 54-39 91 35 50 107 138 10 12 10 25t-9 23q-27 37-99 108t-94 71q-12 0-26-9l-138-108q-44 23-91 38-16 136-29 186-7 28-36 28H657q-14 0-24.500-8.500T621 1506l-28-184q-49-16-90-37l-141 107q-10 9-25 9-14 0-25-11-126-114-165-168-7-10-7-23 0-12 8-23 15-21 51-66.500t54-70.500q-27-50-41-99L29 913q-13-2-21-12.500T0 877V655q0-12 8-23t19-13l186-28q14-46 39-92-40-57-107-138-10-12-10-24 0-10 9-23 26-36 98.500-107.500T337 135q13 0 26 10l138 107q44-23 91-38 16-136 29-186Q628 0 657 0h222q14 0 24.500 8.500T915 30l28 184q49 16 90 37l142-107q9-9 24-9 13 0 25 10 129 119 165 170 7 8 7 22 0 12-8 23-15 21-51 66.500t-54 70.500q26 50 41 98l183 28q13 2 21 12.500t8 23.500z" />
        </svg>
      </div>
      <div className="flex h-[620px] w-[1001px] flex-col bg-white pl-5 pr-[21px] shadow-[0_2px_6px_rgba(0,0,0,0.13)]">
        <div className="flex h-[90px] items-start border-b-2 border-[#ddd] pt-[14px] text-[32.200px] leading-[48px] text-[#3f8bbc]">Risk properties</div>
        <div className="flex flex-col pt-[11px]">
          {fields.map(([k, v]) => (
            <div key={k} className="flex h-[70px]">
              <div className="w-[385px] pt-px text-[25.500px] font-bold leading-[34px]">{k}</div>
              <div className="flex h-[50px] w-[574px] items-center border-2 border-[#e8e8e8] pl-[3px] text-[25.100px] leading-none">{v}</div>
            </div>
          ))}
          <div className="h-[69px] pt-px text-[25.500px] font-bold leading-[34px]">Score</div>
        </div>
        <div className="grid grid-cols-[571px_214px_171px] border-2 border-black text-[25.100px] leading-none">
          {["Response", "Unmit. Score", "Mit. Score"].map((t, i) => (
            <div key={t} className={`flex h-[65px] items-center border-b-[6px] border-black pl-[10px] pt-px text-[25.400px] font-bold ${i ? "border-l-2 pl-[9px]" : ""}`}>{t}</div>
          ))}
          {["Prevent Unauthorised Certificate Access", "9", "1"].map((t, i) => (
            <div key={t} className={`flex h-[61px] items-center border-black pb-[2px] pl-[10px] ${i ? "border-l-2 pl-[9px]" : ""}`}>{t}</div>
          ))}
        </div>
      </div>
    </div>
  );
}

function ZoomControls() {
  return (
    <div className="absolute left-[2185px] top-[1054px] flex w-[112px] flex-col items-center">
      <div className="flex size-[35px] items-center justify-center rounded-[6px] bg-[#aaa]">
        <svg width="24" height="24" viewBox="0 0 24 24" fill="#fff">
          <rect x="9" y="0" width="6" height="24" rx="1.500" />
          <rect x="0" y="9" width="24" height="6" rx="1.500" />
        </svg>
      </div>
      <div className="mt-[13px] flex h-[37px] w-[111px] items-center justify-center rounded-[8px] bg-[#aaa] pt-[3px] font-['Liberation_Sans'] text-[28.500px] font-bold leading-none text-white">RESET</div>
      <div className="mt-[13px] flex size-[35px] items-center justify-center rounded-[6px] bg-[#aaa]">
        <div className="h-[6px] w-6 rounded-[1.500px] bg-white" />
      </div>
    </div>
  );
}

export default function App() {
  return (
    <div className="h-[1816px] w-[3062px] overflow-hidden bg-white pl-[112px] pt-[64px]">
      <div className="relative flex h-[1592px] w-[2838px] flex-col rounded-[10px] shadow-[0_40px_76px_rgba(0,0,0,0.52),0_0_0_1px_rgba(0,0,0,0.25),0_1px_2px_rgba(0,0,0,0.6)]">
        <div className="flex h-full flex-col overflow-hidden rounded-[10px] bg-white">
          <TitleBar />
          <Header />
          <div className="relative h-[1316px] shrink-0 bg-[#ebeef3] px-[30px] pt-[60px]">
            <div className="relative h-[1202px] w-[2778px] bg-white">
              <Graph />
              <ZoomControls />
            </div>
            <RiskPanel />
          </div>
          <div className="h-[100px] shrink-0 pl-[30px] pt-[32px] font-['Noto_Sans_CJK_SC'] text-[25.100px] leading-[34px] text-[#444]">Open Project</div>
        </div>
        <div className="absolute bottom-[6px] left-[7px] flex h-10 w-[1169px] items-center whitespace-pre rounded-[6px] bg-[#f5f5f5] pl-[11px] pt-[3px] font-[Inter] text-[23.500px] leading-none text-[#222]">
          <span>Open “</span>
          <span className="font-semibold">germaneriposte.org:7071</span>
          <span className="text-[#555]">/api/risks/name/Unauthorised%20Certificate%20Access</span>
          <span>” in a new tab</span>
        </div>
      </div>
    </div>
  );
}
